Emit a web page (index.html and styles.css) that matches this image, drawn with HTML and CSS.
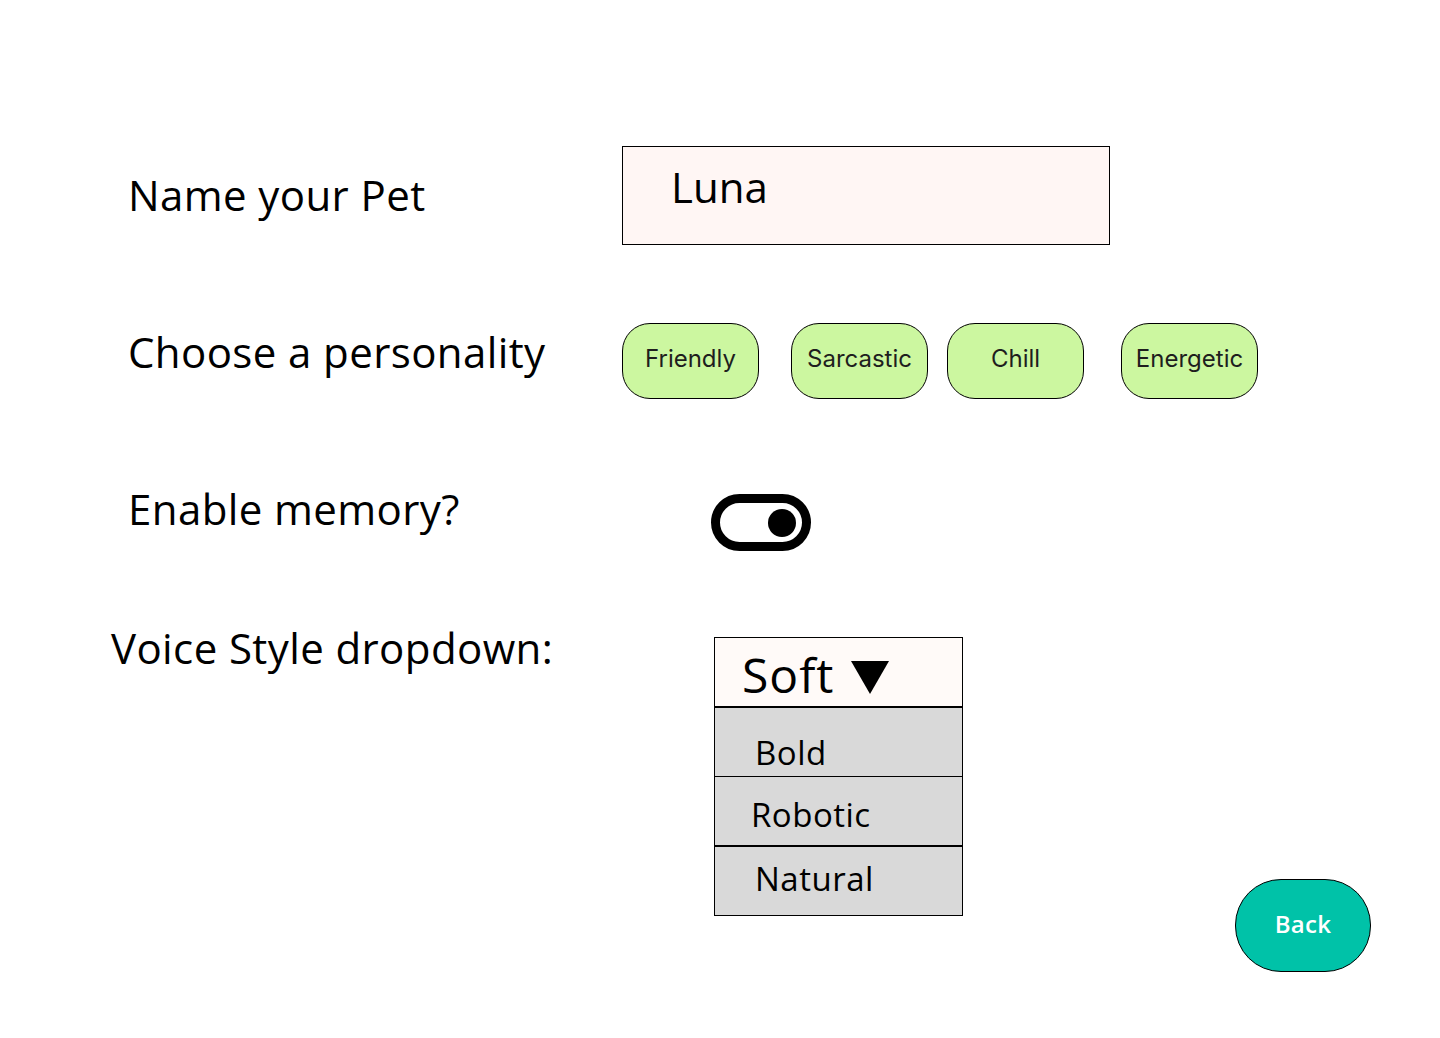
FILE: index.html
```html
<!DOCTYPE html>
<html lang="en">
<head>
<meta charset="utf-8">
<title>Pet Settings</title>
<link rel="stylesheet" href="styles.css">
</head>
<body>
<main class="page">
  <section class="row row-name">
    <div class="label">Name your Pet</div>
    <div class="name-input">Luna</div>
  </section>

  <section class="row row-personality">
    <div class="label">Choose a personality</div>
    <div class="chips">
      <button class="chip chip-friendly">Friendly</button>
      <button class="chip chip-sarcastic">Sarcastic</button>
      <button class="chip chip-chill">Chill</button>
      <button class="chip chip-energetic">Energetic</button>
    </div>
  </section>

  <section class="row row-memory">
    <div class="label">Enable memory?</div>
    <div class="toggle"><span class="knob"></span></div>
  </section>

  <section class="row row-voice">
    <div class="label label-voice">Voice Style dropdown:</div>
    <div class="dropdown">
      <div class="dd-head">
        <span class="dd-value">Soft</span>
        <svg class="caret" width="38" height="33" viewBox="0 0 38 33" aria-hidden="true"><polygon points="0,0 38,0 19,33" fill="#000"/></svg>
      </div>
      <div class="dd-opt dd-bold">Bold</div>
      <div class="dd-opt dd-robotic">Robotic</div>
      <div class="dd-opt dd-natural">Natural</div>
    </div>
  </section>

  <footer class="footer">
    <button class="back">Back</button>
  </footer>
</main>
</body>
</html>
```

FILE: styles.css
```css
* { box-sizing: border-box; }

html, body {
  margin: 0;
  padding: 0;
  background: #ffffff;
}

body {
  width: 1440px;
  height: 1038px;
  overflow: hidden;
  font-family: "Open Sans", "DejaVu Sans", sans-serif;
  color: #000;
}

.page {
  display: flex;
  flex-direction: column;
  padding-top: 146px;
}

.row {
  display: flex;
  align-items: flex-start;
}

.label {
  width: 622px;
  padding-left: 128px;
  font-size: 42px;
  letter-spacing: 0.4px;
  line-height: 1;
  white-space: nowrap;
}

.row-name .label { margin-top: 28px; }

.name-input {
  width: 488px;
  height: 99px;
  border: 1px solid #000;
  background: #fff6f4;
  padding: 19px 0 0 48px;
  font-size: 42px;
  line-height: 1;
}

.row-personality { margin-top: 78px; }
.row-personality .label { margin-top: 8px; }

.chips {
  display: flex;
}

.chip {
  width: 137px;
  height: 76px;
  border: 1px solid #000;
  border-radius: 28px;
  background: #ccf7a0;
  font-family: Inter, "Liberation Sans", sans-serif;
  font-size: 24px;
  font-weight: 400;
  color: #1e1e1e;
  padding: 0 0 5px 0;
}

.chip-sarcastic { margin-left: 32px; }
.chip-chill { margin-left: 19px; }
.chip-energetic { margin-left: 37px; }

.row-memory { margin-top: 95px; }
.row-memory .label { margin-top: -6px; }

.toggle {
  margin-left: 89px;
  width: 100px;
  height: 57px;
  border: 9px solid #000;
  border-radius: 29px;
  display: flex;
  align-items: center;
  justify-content: flex-end;
  padding-right: 6px;
}

.knob {
  width: 28px;
  height: 28px;
  border-radius: 50%;
  background: #000;
}

.row-voice { margin-top: 86px; }
.label-voice { padding-left: 111px; margin-top: -10px; }

.dropdown {
  margin-left: 92px;
  width: 249px;
  border: 1px solid #000;
  display: flex;
  flex-direction: column;
}

.dd-head {
  height: 70px;
  background: #fffaf8;
  border-bottom: 2px solid #000;
  padding: 13px 0 0 27px;
  display: flex;
  align-items: flex-start;
}

.dd-value {
  font-size: 48px;
  letter-spacing: 1px;
  line-height: 1;
}

.caret {
  display: block;
  margin-left: 17px;
  margin-top: 10px;
}

.dd-opt {
  height: 69px;
  background: #d9d9d9;
  font-size: 33px;
  letter-spacing: 0.5px;
  line-height: 1;
}

.dd-bold { padding: 28px 0 0 40px; border-bottom: 1px solid #000; }
.dd-robotic { padding: 21px 0 0 36px; border-bottom: 2px solid #000; height: 70px; }
.dd-natural { padding: 15px 0 0 40px; height: 68px; }

.footer {
  display: flex;
  justify-content: flex-end;
  padding-right: 69px;
  margin-top: -37px;
}

.back {
  width: 136px;
  height: 93px;
  border: 1px solid #000;
  border-radius: 46px;
  background: #00c2a8;
  color: #fff;
  font-family: "Open Sans", sans-serif;
  font-weight: 600;
  font-size: 24px;
  letter-spacing: 0.3px;
  padding: 0 0 4px 0;
}
```
